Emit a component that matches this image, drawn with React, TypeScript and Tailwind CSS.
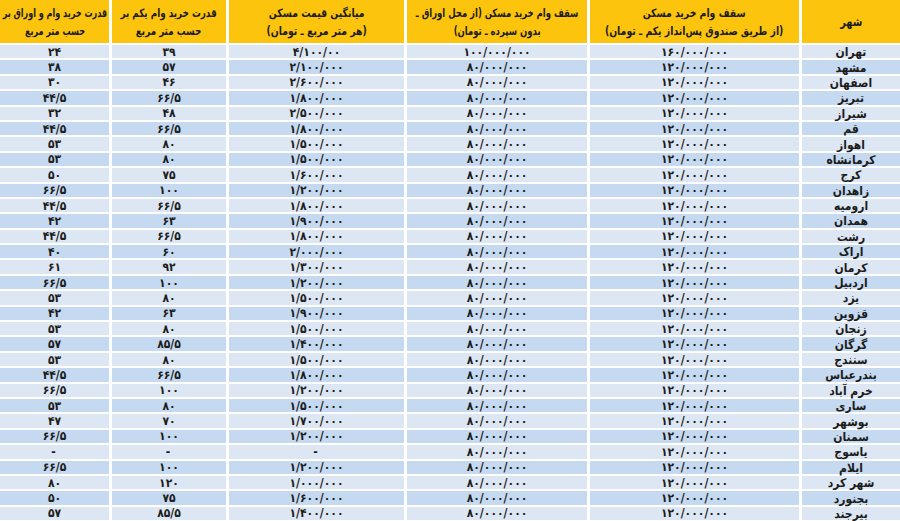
const toFa = (s: string) =>
  s.replace(/[0-9]/g, (d) => "۰۱۲۳۴۵۶۷۸۹"[Number(d)]);

type Row = [string, string, string, string, string, string];

// city, yekom loan, bonds loan, avg price, yekom power, loan+bonds power
const rows: Row[] = [
  ["تهران", "160/000/000", "100/000/000", "4/100/00", "39", "24"],
  ["مشهد", "120/000/000", "80/000/000", "2/100/000", "57", "38"],
  ["اصفهان", "120/000/000", "80/000/000", "2/600/000", "46", "30"],
  ["تبریز", "120/000/000", "80/000/000", "1/800/000", "66/5", "44/5"],
  ["شیراز", "120/000/000", "80/000/000", "2/500/000", "48", "32"],
  ["قم", "120/000/000", "80/000/000", "1/800/000", "66/5", "44/5"],
  ["اهواز", "120/000/000", "80/000/000", "1/500/000", "80", "53"],
  ["کرمانشاه", "120/000/000", "80/000/000", "1/500/000", "80", "53"],
  ["کرج", "120/000/000", "80/000/000", "1/600/000", "75", "50"],
  ["زاهدان", "120/000/000", "80/000/000", "1/200/000", "100", "66/5"],
  ["ارومیه", "120/000/000", "80/000/000", "1/800/000", "66/5", "44/5"],
  ["همدان", "120/000/000", "80/000/000", "1/900/000", "63", "42"],
  ["رشت", "120/000/000", "80/000/000", "1/800/000", "66/5", "44/5"],
  ["اراک", "120/000/000", "80/000/000", "2/000/000", "60", "40"],
  ["کرمان", "120/000/000", "80/000/000", "1/300/000", "92", "61"],
  ["اردبیل", "120/000/000", "80/000/000", "1/200/000", "100", "66/5"],
  ["یزد", "120/000/000", "80/000/000", "1/500/000", "80", "53"],
  ["قزوین", "120/000/000", "80/000/000", "1/900/000", "63", "42"],
  ["زنجان", "120/000/000", "80/000/000", "1/500/000", "80", "53"],
  ["گرگان", "120/000/000", "80/000/000", "1/400/000", "85/5", "57"],
  ["سنندج", "120/000/000", "80/000/000", "1/500/000", "80", "53"],
  ["بندرعباس", "120/000/000", "80/000/000", "1/800/000", "66/5", "44/5"],
  ["خرم آباد", "120/000/000", "80/000/000", "1/200/000", "100", "66/5"],
  ["ساری", "120/000/000", "80/000/000", "1/500/000", "80", "53"],
  ["بوشهر", "120/000/000", "80/000/000", "1/700/000", "70", "47"],
  ["سمنان", "120/000/000", "80/000/000", "1/200/000", "100", "66/5"],
  ["یاسوج", "120/000/000", "80/000/000", "-", "-", "-"],
  ["ایلام", "120/000/000", "80/000/000", "1/200/000", "100", "66/5"],
  ["شهر کرد", "120/000/000", "80/000/000", "1/000/000", "120", "80"],
  ["بجنورد", "120/000/000", "80/000/000", "1/600/000", "75", "50"],
  ["بیرجند", "120/000/000", "80/000/000", "1/400/000", "85/5", "57"],
];

const headers: { lines: string[]; cls: string }[] = [
  { lines: ["شهر"], cls: "text-[12px] scale-x-[0.9]" },
  {
    lines: ["سقف وام خرید مسکن", "(از طریق صندوق پس‌انداز یکم ـ تومان)"],
    cls: "text-[11.5px] scale-x-[0.9]",
  },
  {
    lines: ["سقف وام خرید مسکن (از محل اوراق ـ", "بدون سپرده ـ تومان)"],
    cls: "text-[11.5px] scale-x-[0.82]",
  },
  {
    lines: ["میانگین قیمت مسکن", "(هر متر مربع ـ تومان)"],
    cls: "text-[11.5px] scale-x-[0.9]",
  },
  {
    lines: ["قدرت خرید وام یکم بر", "حسب متر مربع"],
    cls: "text-[11.5px] scale-x-[0.85]",
  },
  {
    lines: ["قدرت خرید وام و اوراق بر", "حسب متر مربع"],
    cls: "text-[11.5px] scale-x-[0.78]",
  },
];

export default function App() {
  return (
    <div
      dir="rtl"
      className="w-[900px] h-[521px] overflow-hidden bg-white font-bold text-[#1c1c1c]"
      style={{ fontFamily: '"DejaVu Sans Condensed", "DejaVu Sans", sans-serif' }}
    >
      <div className="grid grid-cols-[98px_209px_180px_175px_114px_109px] gap-x-[3px] gap-y-[2px]">
        {headers.map((h, i) => (
          <div
            key={i}
            className="h-[43px] min-w-0 bg-[#fcc40c] flex items-center justify-center whitespace-nowrap"
          >
            <div
              className={`shrink-0 flex flex-col items-center leading-[18px] ${h.cls}`}
            >
              {h.lines.map((line, j) => (
                <span key={j}>{line}</span>
              ))}
            </div>
          </div>
        ))}

        {rows.map((r, ri) =>
          r.map((cell, ci) => (
            <div
              key={ri + "-" + ci}
              className={`h-[13.4px] min-w-0 flex items-center justify-center whitespace-nowrap ${
                ri % 2 === 0 ? "bg-[#dde7f3]" : "bg-[#c5d9f0]"
              } ${
                ci === 0
                  ? "text-[12px] leading-none pt-[1px]"
                  : "text-[12px] leading-none tracking-[2px]"
              }`}
            >
              {ci === 0 ? cell : toFa(cell)}
            </div>
          ))
        )}
      </div>
    </div>
  );
}
